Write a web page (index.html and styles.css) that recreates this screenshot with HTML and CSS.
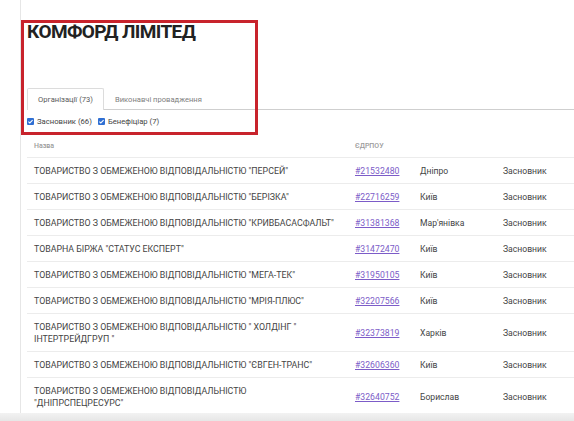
FILE: index.html
```html
<!DOCTYPE html>
<html lang="uk">
<head>
<meta charset="utf-8">
<title>КОМФОРД ЛІМІТЕД</title>
<link rel="stylesheet" href="styles.css">
</head>
<body>
<div class="page">
  <h1 class="title">КОМФОРД ЛІМІТЕД</h1>
  <div class="tabs">
    <div class="tab active">Організації (73)</div>
    <div class="tab">Виконавчі провадження</div>
  </div>
  <div class="filters">
    <label class="check"><span class="box"><svg viewBox="0 0 8 8" width="7" height="7"><path d="M1.6 4.1 L3.2 5.6 L6.4 2.4" fill="none" stroke="#fff" stroke-width="1.2"/></svg></span>Засновник (66)</label>
    <label class="check"><span class="box"><svg viewBox="0 0 8 8" width="7" height="7"><path d="M1.6 4.1 L3.2 5.6 L6.4 2.4" fill="none" stroke="#fff" stroke-width="1.2"/></svg></span>Бенефіціар (7)</label>
  </div>
  <table class="orgs">
    <thead>
      <tr><th class="c-name">Назва</th><th class="c-code">ЄДРПОУ</th><th class="c-city"></th><th class="c-role"></th></tr>
    </thead>
    <tbody>
      <tr><td>ТОВАРИСТВО З ОБМЕЖЕНОЮ ВІДПОВІДАЛЬНІСТЮ "ПЕРСЕЙ"</td><td class="code"><a href="#">#21532480</a></td><td>Дніпро</td><td>Засновник</td></tr>
      <tr><td>ТОВАРИСТВО З ОБМЕЖЕНОЮ ВІДПОВІДАЛЬНІСТЮ "БЕРІЗКА"</td><td class="code"><a href="#">#22716259</a></td><td>Київ</td><td>Засновник</td></tr>
      <tr><td>ТОВАРИСТВО З ОБМЕЖЕНОЮ ВІДПОВІДАЛЬНІСТЮ "КРИВБАСАСФАЛЬТ"</td><td class="code"><a href="#">#31381368</a></td><td>Мар'янівка</td><td>Засновник</td></tr>
      <tr><td>ТОВАРНА БІРЖА "СТАТУС ЕКСПЕРТ"</td><td class="code"><a href="#">#31472470</a></td><td>Київ</td><td>Засновник</td></tr>
      <tr><td>ТОВАРИСТВО З ОБМЕЖЕНОЮ ВІДПОВІДАЛЬНІСТЮ "МЕГА-ТЕК"</td><td class="code"><a href="#">#31950105</a></td><td>Київ</td><td>Засновник</td></tr>
      <tr><td>ТОВАРИСТВО З ОБМЕЖЕНОЮ ВІДПОВІДАЛЬНІСТЮ "МРІЯ-ПЛЮС"</td><td class="code"><a href="#">#32207566</a></td><td>Київ</td><td>Засновник</td></tr>
      <tr><td>ТОВАРИСТВО З ОБМЕЖЕНОЮ ВІДПОВІДАЛЬНІСТЮ " ХОЛДІНГ " ІНТЕРТРЕЙДГРУП "</td><td class="code"><a href="#">#32373819</a></td><td>Харків</td><td>Засновник</td></tr>
      <tr><td>ТОВАРИСТВО З ОБМЕЖЕНОЮ ВІДПОВІДАЛЬНІСТЮ "ЄВГЕН-ТРАНС"</td><td class="code"><a href="#">#32606360</a></td><td>Київ</td><td>Засновник</td></tr>
      <tr><td>ТОВАРИСТВО З ОБМЕЖЕНОЮ ВІДПОВІДАЛЬНІСТЮ<br>"ДНІПРСПЕЦРЕСУРС"</td><td class="code"><a href="#">#32640752</a></td><td>Борислав</td><td>Засновник</td></tr>
    </tbody>
  </table>
</div>
<div class="highlight"></div>
<div class="bottom-band"></div>
</body>
</html>
```
FILE: styles.css
```css
html, body {
  margin: 0;
  padding: 0;
  background: #fff;
  overflow: hidden;
}
body {
  font-family: Roboto, "Noto Sans", sans-serif;
  color: #333;
  width: 574px;
  height: 421px;
}
.page {
  margin-left: 20px;
  padding: 20px 0 0 6px;
  border-left: 1px solid #e6e6e6;
  min-height: 401px;
}
.title {
  margin: 0;
  font-size: 19px;
  line-height: 24px;
  font-weight: 700;
  color: #222;
  letter-spacing: -0.6px;
}
.tabs {
  margin-top: 44px;
  display: flex;
  border-bottom: 1px solid #cfcfcf;
  height: 22px;
  box-sizing: border-box;
}
.tab {
  font-size: 7.6px;
  line-height: 21px;
  padding: 0 10px;
  color: #808080;
  box-sizing: border-box;
  border: 1px solid transparent;
  border-bottom: none;
}
.tab.active {
  color: #5a5a5a;
  border-color: #dcdcdc;
  background: #fff;
  height: 22px;
  border-radius: 2px 2px 0 0;
}
.filters {
  display: flex;
  align-items: center;
  gap: 6px;
  height: 23px;
  font-size: 7.7px;
  color: #444;
}
.check {
  display: flex;
  align-items: center;
  gap: 3px;
}
.box {
  width: 7px;
  height: 7px;
  background: #2f6fd3;
  border-radius: 1px;
  display: flex;
}
.orgs {
  margin-top: 2px;
  border-collapse: collapse;
  width: 547px;
  table-layout: fixed;
  font-size: 8.6px;
}
.orgs th,
.orgs td {
  box-sizing: border-box;
}
.orgs th {
  text-align: left;
  font-weight: 500;
  color: #9a9a9a;
  font-size: 7px;
  height: 22px;
  padding: 0 7px;
  border-bottom: 1px solid #ececec;
}
.c-name { width: 321px; }
.c-code { width: 65px; }
.c-city { width: 83px; }
.orgs td {
  padding: 7px 4px 6px 7px;
  line-height: 12px;
  border-bottom: 1px solid #ececec;
  vertical-align: middle;
  color: #444;
  white-space: nowrap;
}
.orgs td:first-child {
  font-size: 8.8px;
  white-space: normal;
  padding-right: 8px;
}
.orgs td.code {
  font-size: 8.7px;
}
.orgs a {
  color: #7c5cc8;
  text-decoration: underline;
}
.highlight {
  position: absolute;
  left: 21px;
  top: 20px;
  width: 237px;
  height: 115px;
  box-sizing: border-box;
  border: 3px solid #c8232c;
}
.bottom-band {
  position: fixed;
  left: 0;
  right: 0;
  bottom: 0;
  height: 8px;
  background: linear-gradient(to bottom, #f2f2f2, #e6e6e6);
}
```
